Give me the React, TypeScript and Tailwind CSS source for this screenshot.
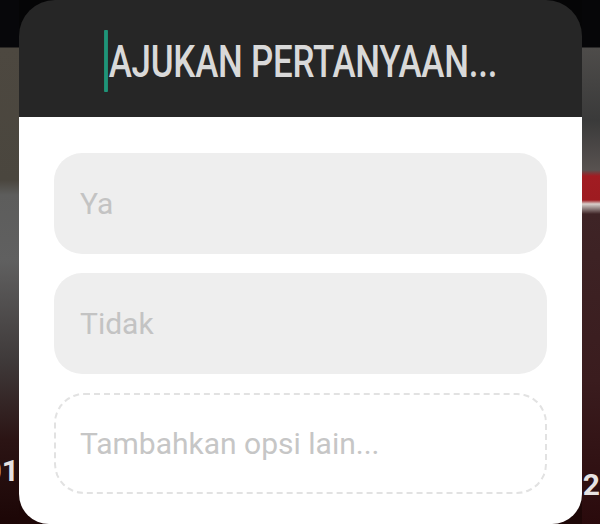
const OPTIONS = ["Ya", "Tidak"];

function Strip({ side }: { side: "left" | "right" }) {
  const isLeft = side === "left";
  return (
    <div
      className={
        isLeft
          ? "flex w-[19px] shrink-0 flex-col overflow-hidden bg-[linear-gradient(180deg,#07070a_0px,#07070a_47px,#4d4840_48px,#4a463e_180px,#5d5d5c_195px,#606060_260px,#3f3a3a_360px,#2b1414_440px,#1c0606_524px)]"
          : "flex w-[18px] shrink-0 flex-col overflow-hidden bg-[linear-gradient(180deg,#060608_0px,#060608_47px,#4e4c4a_48px,#3a3a3a_120px,#585250_170px,#a11c22_176px,#9e1b20_200px,#d8d0cc_204px,#3e2426_214px,#3a1c1e_380px,#2a0a0c_524px)]"
      }
    >
      <div className="flex-1" />
      <div
        className={
          isLeft
            ? "mb-[38px] flex justify-end font-['Roboto',sans-serif] text-[30px] font-bold leading-none text-[#e6e2e2]"
            : "mb-[24px] flex justify-end font-['Roboto',sans-serif] text-[30px] font-bold leading-none text-[#e6e2e2]"
        }
      >
        <span className="shrink-0">{isLeft ? "01" : "02"}</span>
      </div>
    </div>
  );
}

export default function App() {
  return (
    <div className="flex h-[524px] w-[600px] overflow-hidden bg-[linear-gradient(180deg,#050506,#050506_200px,#1e0707)]">
      <Strip side="left" />
      <div className="flex w-[563px] shrink-0 flex-col overflow-hidden rounded-t-[36px] rounded-b-[30px]">
        <div className="flex h-[117px] shrink-0 items-center justify-center bg-[#262626] pt-[5px]">
          <div className="flex scale-x-[0.775] items-center">
            <span className="mr-[1px] h-[62px] w-[5px] rounded-[1px] bg-[#1f9478]" />
            <span className="inline-block font-['Roboto',sans-serif] text-[45px] font-medium leading-none tracking-[-0.3px] text-[#d9d9d9]">
              AJUKAN PERTANYAAN...
            </span>
          </div>
        </div>
        <div className="flex flex-1 flex-col gap-[19px] bg-white px-[35px] pt-[36px]">
          {OPTIONS.map((label) => (
            <div
              key={label}
              className="flex h-[101px] items-center rounded-[28px] bg-[#eeeeee] px-[26px]"
            >
              <span className="font-['Roboto',sans-serif] text-[30px] text-[#c3c3c3]">{label}</span>
            </div>
          ))}
          <div className="flex h-[101px] items-center rounded-[30px] border-2 border-dashed border-[#e2e2e2] px-[24px]">
            <span className="font-['Roboto',sans-serif] text-[30px] text-[#c6c6c6]">
              Tambahkan opsi lain...
            </span>
          </div>
        </div>
      </div>
      <Strip side="right" />
    </div>
  );
}
